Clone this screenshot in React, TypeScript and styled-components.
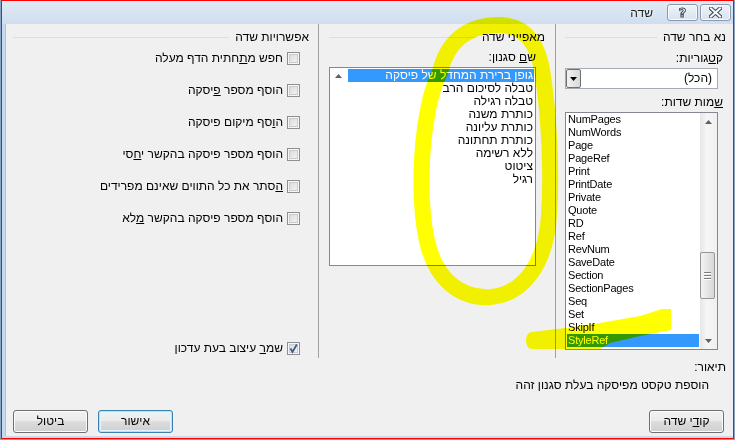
import React from 'react';
import styled, { createGlobalStyle } from 'styled-components';

const fields = [
  'NumPages', 'NumWords', 'Page', 'PageRef', 'Print', 'PrintDate', 'Private', 'Quote', 'RD',
  'Ref', 'RevNum', 'SaveDate', 'Section', 'SectionPages', 'Seq', 'Set', 'SkipIf', 'StyleRef',
];

const styleNames = [
  'גופן ברירת המחדל של פיסקה',
  'טבלה לסיכום הרב',
  'טבלה רגילה',
  'כותרת משנה',
  'כותרת עליונה',
  'כותרת תחתונה',
  'ללא רשימה',
  'ציטוט',
  'רגיל',
];

// [before, access key, after]
const options: [string, string, string][] = [
  ['חפש מ', 'ת', 'חתית הדף מעלה'],
  ['הוסף מספר ', 'פ', 'יסקה'],
  ['ה', 'ו', 'סף מיקום פיסקה'],
  ['הוסף מספר פיסקה בהקשר י', 'ח', 'סי'],
  ['', 'ה', 'סתר את כל התווים שאינם מפרידים'],
  ['הוסף מספר פיסקה בהקשר ', 'מ', 'לא'],
];

const Label3 = ({ parts }: { parts: [string, string, string] }) => (
  <>
    {parts[0]}
    <Key>{parts[1]}</Key>
    {parts[2]}
  </>
);

const UpArrow = () => (
  <svg width="7" height="4" viewBox="0 0 7 4">
    <polygon points="0,4 7,4 3.5,0" fill="#606060" />
  </svg>
);

const DownArrow = ({ color = '#606060' }: { color?: string }) => (
  <svg width="7" height="4" viewBox="0 0 7 4">
    <polygon points="0,0 7,0 3.5,4" fill={color} />
  </svg>
);

const App: React.FC = () => {
  return (
    <Screen>
      <GlobalStyle />
      <Window>
        <TitleBar>
          <Title>שדה</Title>
          <CaptionButton>
            <HelpGlyph>?</HelpGlyph>
          </CaptionButton>
          <CaptionButton>
            <svg width="13" height="11" viewBox="0 0 13 11">
              <path d="M2 1.5 L11 9.5 M11 1.5 L2 9.5" stroke="#3e4a5c" strokeWidth="4" strokeLinecap="square" />
              <path d="M2 1.5 L11 9.5 M11 1.5 L2 9.5" stroke="#f7f9fb" strokeWidth="2" strokeLinecap="square" />
            </svg>
          </CaptionButton>
        </TitleBar>
        <Client>
          <Columns>
            <FieldColumn>
              <GroupHeader>
                <GroupTitle>נא בחר שדה</GroupTitle>
                <GroupLine />
              </GroupHeader>
              <FieldLabel $top={8}>
                ק<Key>ט</Key>גוריות:
              </FieldLabel>
              <Combo>
                <ComboText>(הכל)</ComboText>
                <ComboButton>
                  <DownArrow color="#000" />
                </ComboButton>
              </Combo>
              <FieldLabel $top={7}>
                <Key>ש</Key>מות שדות:
              </FieldLabel>
              <FieldList>
                <FieldItems>
                  {fields.map((f) => (
                    <FieldItem key={f} $selected={f === 'StyleRef'}>
                      {f}
                    </FieldItem>
                  ))}
                </FieldItems>
                <ScrollBar>
                  <ScrollArrow>
                    <UpArrow />
                  </ScrollArrow>
                  <Thumb $offset={122}>
                    <Grip />
                    <Grip />
                    <Grip />
                  </Thumb>
                  <ScrollFill />
                  <ScrollArrow>
                    <DownArrow />
                  </ScrollArrow>
                </ScrollBar>
              </FieldList>
            </FieldColumn>
            <Divider />
            <PropsColumn>
              <GroupHeader>
                <GroupTitle>מאפייני שדה</GroupTitle>
                <GroupLine />
              </GroupHeader>
              <PropsLabel>
                ש<Key>ם</Key> סגנון:
              </PropsLabel>
              <StyleList>
                <StyleItems>
                  {styleNames.map((s, i) => (
                    <StyleItem key={s} $selected={i === 0}>
                      {s}
                    </StyleItem>
                  ))}
                </StyleItems>
                <GhostScroll>
                  <UpArrow />
                </GhostScroll>
              </StyleList>
            </PropsColumn>
            <Divider />
            <OptionsColumn>
              <GroupHeader>
                <GroupTitle>אפשרויות שדה</GroupTitle>
                <GroupLine />
              </GroupHeader>
              {options.map((o, i) => (
                <OptionRow key={i} $top={i === 0 ? 8 : 19}>
                  <CheckBox />
                  <span>
                    <Label3 parts={o} />
                  </span>
                </OptionRow>
              ))}
              <KeepRow>
                <CheckBox>
                  <svg width="11" height="11" viewBox="0 0 11 11">
                    <path d="M2.5 5.5 L4.5 9 L8.8 1.5" fill="none" stroke="#3f5990" strokeWidth="1.7" />
                  </svg>
                </CheckBox>
                <span>
                  <Label3 parts={['שמ', 'ר', ' עיצוב בעת עדכון']} />
                </span>
              </KeepRow>
            </OptionsColumn>
          </Columns>
          <Footer>
            <DescLabel>תיאור:</DescLabel>
            <DescText>הוספת טקסט מפיסקה בעלת סגנון זהה</DescText>
            <ButtonRow>
              <Button>
                קו<Key>ד</Key>י שדה
              </Button>
              <ButtonGroup>
                <Button $default>אישור</Button>
                <Button>ביטול</Button>
              </ButtonGroup>
            </ButtonRow>
          </Footer>
        </Client>
      </Window>
      <Highlighter viewBox="0 0 735 440">
        <path
          d="M440 72 C447 42 467 26 496 25 C526 24 539 45 543 76 C549 116 552 172 549 216 C546 261 525 294 491 297 C458 299 435 277 427 241 C419 205 420 150 428 110 C431 94 435 82 440 72 Z"
          fill="none"
          stroke="#ffff00"
          strokeWidth="16"
          strokeLinejoin="round"
        />
        <path
          d="M532 332 L565 328 L600 323 L640 316 L662 309 L671 309 L671 330 L640 336 L610 343 L600 349 L532 349 C524 349 524 332 532 332 Z"
          fill="#ffff00"
        />
      </Highlighter>
    </Screen>
  );
};

export default App;

const GlobalStyle = createGlobalStyle`
  html, body {
    margin: 0;
    padding: 0;
  }
  body {
    width: 735px;
    height: 440px;
    overflow: hidden;
    font-family: "Liberation Sans", "DejaVu Sans", sans-serif;
    font-size: 12px;
    color: #000;
  }
`;

const Screen = styled.div`
  position: relative;
  isolation: isolate;
  width: 735px;
  height: 440px;
  padding-left: 1px;
  box-sizing: border-box;
  background: #8aa4c6;
`;

const Window = styled.div`
  width: 733px;
  height: 439px;
  box-sizing: border-box;
  border: 1px solid #ff0000;
  background: #c9d9ec;
  display: flex;
  flex-direction: column;
`;

const TitleBar = styled.div`
  height: 23px;
  flex-shrink: 0;
  display: flex;
  align-items: center;
  justify-content: flex-end;
  gap: 2px;
  padding-right: 2px;
  background: linear-gradient(#e1eaf5, #cfdeef);
`;

const Title = styled.div`
  margin-right: 12px;
  font-size: 12px;
  color: #1e1e1e;
  text-shadow: 0 0 4px #fff;
`;

const CaptionButton = styled.div`
  width: 31px;
  height: 17px;
  box-sizing: border-box;
  border: 1px solid #8a99ae;
  border-radius: 3px;
  background: linear-gradient(#eef3f8, #d9e3ee);
  box-shadow: inset 0 0 0 1px #f7f9fc;
  display: flex;
  align-items: center;
  justify-content: center;
`;

const HelpGlyph = styled.span`
  font-family: "DejaVu Sans", sans-serif;
  font-weight: bold;
  font-size: 13px;
  line-height: 13px;
  color: #f7f9fb;
  -webkit-text-stroke: 1px #3e4a5c;
`;

const Client = styled.div`
  flex: 1;
  direction: rtl;
  display: flex;
  flex-direction: column;
  background: #f0f0f0;
  border-left: 3px solid #c9d9ec;
  border-bottom: 2px solid #c9d9ec;
  box-shadow: inset 1px 0 0 #b3c2d4;
`;

const Columns = styled.div`
  height: 334px;
  display: grid;
  grid-template-columns: 177px 1px 236px 1px 313px;
`;

const Divider = styled.div`
  background: #a0a0a0;
`;

const FieldColumn = styled.div`
  display: flex;
  flex-direction: column;
  align-items: flex-start;
  padding: 7px 7px 0 9px;
`;

const PropsColumn = styled.div`
  display: flex;
  flex-direction: column;
  align-items: flex-start;
  padding: 7px 10px 0 10px;
`;

const OptionsColumn = styled.div`
  display: flex;
  flex-direction: column;
  align-items: flex-start;
  padding: 7px 9px 0 8px;
`;

const GroupHeader = styled.div`
  align-self: stretch;
  display: flex;
  align-items: center;
  gap: 6px;
  height: 13px;
  line-height: 13px;
`;

const GroupTitle = styled.span`
  white-space: nowrap;
`;

const GroupLine = styled.div`
  flex: 1;
  height: 1px;
  background: #d5dfe5;
`;

const Key = styled.span`
  text-decoration: underline;
`;

const FieldLabel = styled.div<{ $top: number }>`
  margin: ${(p) => p.$top}px 3px 0 0;
  line-height: 13px;
`;

const Combo = styled.div`
  margin: 3px 8px 0 0;
  width: 153px;
  height: 21px;
  box-sizing: border-box;
  border: 1px solid #a5acb5;
  background: #fff;
  display: flex;
`;

const ComboText = styled.div`
  flex: 1;
  padding-right: 5px;
  line-height: 19px;
`;

const ComboButton = styled.div`
  width: 15px;
  box-sizing: border-box;
  border: 1px solid #707070;
  border-radius: 2px;
  background: linear-gradient(to right, #f2f2f2, #d8d8d8);
  display: flex;
  align-items: center;
  justify-content: center;
`;

const FieldList = styled.div`
  margin: 3px 8px 0 0;
  width: 153px;
  height: 238px;
  box-sizing: border-box;
  border: 1px solid #828790;
  background: #fff;
  direction: ltr;
  display: flex;
`;

const FieldItems = styled.div`
  flex: 1;
  padding: 0 1px;
  overflow: hidden;
`;

const FieldItem = styled.div<{ $selected?: boolean }>`
  height: 13px;
  line-height: 13px;
  padding-left: 1px;
  font-size: 11px;
  letter-spacing: -0.2px;
  white-space: nowrap;
  background: ${(p) => (p.$selected ? '#3399ff' : 'transparent')};
  color: ${(p) => (p.$selected ? '#fff' : '#000')};
`;

const ScrollBar = styled.div`
  width: 17px;
  display: flex;
  flex-direction: column;
  background: linear-gradient(to right, #e6e6e6, #f6f6f6 40%, #f0f0f0);
`;

const ScrollArrow = styled.div`
  height: 17px;
  display: flex;
  align-items: center;
  justify-content: center;
`;

const Thumb = styled.div<{ $offset: number }>`
  margin: ${(p) => p.$offset}px 2px 0 0;
  height: 47px;
  box-sizing: border-box;
  border: 1px solid #979797;
  border-radius: 2px;
  background: linear-gradient(to right, #f3f3f3, #e6e6e6 50%, #d6d6d6);
  display: flex;
  flex-direction: column;
  align-items: center;
  justify-content: center;
  gap: 2px;
`;

const Grip = styled.div`
  width: 7px;
  height: 1px;
  background: #7c7c7c;
  box-shadow: 0 1px 0 #fff;
`;

const ScrollFill = styled.div`
  flex: 1;
`;

const PropsLabel = styled.div`
  margin: 7px 9px 0 0;
  line-height: 13px;
`;

const StyleList = styled.div`
  margin: 3px 9px 0 0;
  width: 207px;
  height: 199px;
  box-sizing: border-box;
  border: 1px solid #828790;
  background: #fff;
  display: flex;
`;

const StyleItems = styled.div`
  flex: 1;
  padding: 1px 1px 0 1px;
  overflow: hidden;
`;

const StyleItem = styled.div<{ $selected?: boolean }>`
  height: 13px;
  line-height: 13px;
  padding-right: 1px;
  white-space: nowrap;
  background: ${(p) => (p.$selected ? '#3399ff' : 'transparent')};
  color: ${(p) => (p.$selected ? '#fff' : '#000')};
`;

const GhostScroll = styled.div`
  width: 17px;
  display: flex;
  justify-content: center;
  padding-top: 6px;
  box-sizing: border-box;
`;

const OptionRow = styled.div<{ $top: number }>`
  margin: ${(p) => p.$top}px 9px 0 0;
  height: 13px;
  line-height: 13px;
  display: flex;
  align-items: center;
  gap: 4px;
  white-space: nowrap;
`;

const KeepRow = styled(OptionRow).attrs({ $top: 0 })`
  margin-top: auto;
  margin-bottom: 3px;
`;

const CheckBox = styled.span`
  width: 13px;
  height: 13px;
  flex-shrink: 0;
  box-sizing: border-box;
  border: 1px solid #8e8f8f;
  background: linear-gradient(135deg, #d4d6d9, #f8f8f8);
  box-shadow: inset 0 0 0 1px #f6f6f6, inset 0 0 0 2px #c9cbce;
  display: flex;
  align-items: center;
  justify-content: center;
`;

const Footer = styled.div`
  flex: 1;
  display: flex;
  flex-direction: column;
  align-items: flex-start;
  padding: 0 7px 0 8px;
`;

const DescLabel = styled.div`
  margin-top: 3px;
  line-height: 13px;
`;

const DescText = styled.div`
  margin: 5px 17px 0 0;
  line-height: 13px;
`;

const ButtonRow = styled.div`
  align-self: stretch;
  margin: 18px 2px 0 0;
  display: flex;
  justify-content: space-between;
`;

const ButtonGroup = styled.div`
  display: flex;
  gap: 10px;
`;

const Button = styled.div<{ $default?: boolean }>`
  width: 75px;
  height: 23px;
  box-sizing: border-box;
  border: 1px solid ${(p) => (p.$default ? '#3c7fb1' : '#707070')};
  border-radius: 3px;
  background: linear-gradient(#f2f2f2 0%, #ebebeb 49%, #dddddd 50%, #cfcfcf 100%);
  box-shadow: ${(p) =>
    p.$default ? 'inset 0 0 0 1px #b6e3fb, inset 0 0 0 2px #e3f4fc' : 'inset 0 0 0 1px #fbfbfb'};
  display: flex;
  align-items: center;
  justify-content: center;
  line-height: 13px;
`;

const Highlighter = styled.svg`
  position: absolute;
  top: 0;
  left: 0;
  width: 735px;
  height: 440px;
  pointer-events: none;
  mix-blend-mode: multiply;
`;
